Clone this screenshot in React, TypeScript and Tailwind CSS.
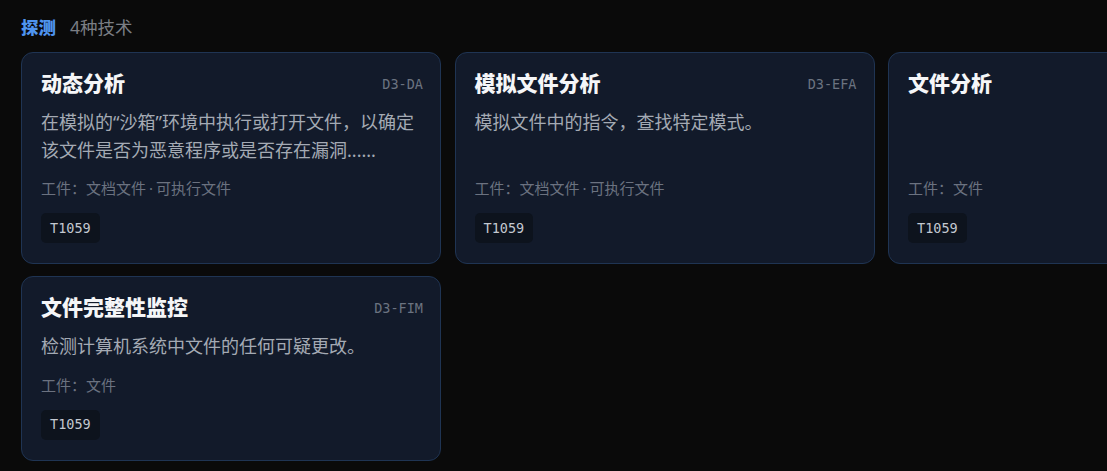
import React from "react";

type Technique = {
  title: string;
  code: string;
  showCode: boolean;
  description?: string;
  artifacts: string[];
  attack: string;
};

const techniques: Technique[] = [
  {
    title: "动态分析",
    code: "D3-DA",
    showCode: true,
    description: "在模拟的“沙箱”环境中执行或打开文件，以确定该文件是否为恶意程序或是否存在漏洞......",
    artifacts: ["文档文件", "可执行文件"],
    attack: "T1059",
  },
  {
    title: "模拟文件分析",
    code: "D3-EFA",
    showCode: true,
    description: "模拟文件中的指令，查找特定模式。",
    artifacts: ["文档文件", "可执行文件"],
    attack: "T1059",
  },
  {
    title: "文件分析",
    code: "D3-FA",
    showCode: false,
    artifacts: ["文件"],
    attack: "T1059",
  },
  {
    title: "文件完整性监控",
    code: "D3-FIM",
    showCode: true,
    description: "检测计算机系统中文件的任何可疑更改。",
    artifacts: ["文件"],
    attack: "T1059",
  },
];

const sans = "font-['Noto_Sans','Noto_Sans_CJK_SC',sans-serif]";
const mono = "font-['DejaVu_Sans_Mono','Liberation_Mono',monospace]";

function TechniqueCard({ t }: { t: Technique }) {
  return (
    <div className="flex flex-col rounded-xl border border-[#1f3453] bg-[#121a2a] pl-[19px] pr-[17px] pt-[18px] pb-[20px]">
      <div className="flex items-center justify-between">
        <h3 className="text-[21px] leading-[25px] font-extrabold text-[#f5f6f8] whitespace-nowrap">
          {t.title}
        </h3>
        {t.showCode && (
          <span className={`${mono} text-[13.5px] leading-[20px] text-[#6b7380]`}>{t.code}</span>
        )}
      </div>
      {t.description && (
        <p className="mt-[13px] pr-[2px] text-[18px] leading-[27.5px] text-[#a4aab4]">{t.description}</p>
      )}
      <div className="mt-auto pt-[14px]">
        <p className="text-[15px] leading-[21px] text-[#6b7280]">
          工件：
          {t.artifacts.map((a, i) => (
            <React.Fragment key={a}>
              {i > 0 && <span className="mx-[3px]">·</span>}
              {a}
            </React.Fragment>
          ))}
        </p>
        <div className="mt-[14px] flex">
          <span
            className={`${mono} flex h-[30px] items-center rounded-[5px] bg-[#0d131d] px-[9px] text-[13.5px] text-[#c3c8d0]`}
          >
            {t.attack}
          </span>
        </div>
      </div>
    </div>
  );
}

export default function App() {
  return (
    <div className={`${sans} min-h-screen w-screen overflow-hidden bg-[#0a0a0a] pl-[21px] pt-[15px]`}>
      <div className="mb-[13px] flex items-center gap-[14px] text-[17.5px] leading-[24px]">
        <span className="font-extrabold text-[#4f94f0]">探测</span>
        <span className="text-[#7b7e84]">4种技术</span>
      </div>
      <div className="grid grid-cols-[repeat(3,420px)] gap-x-[13.5px] gap-y-[12px]">
        {techniques.map((t) => (
          <TechniqueCard key={t.code} t={t} />
        ))}
      </div>
    </div>
  );
}
